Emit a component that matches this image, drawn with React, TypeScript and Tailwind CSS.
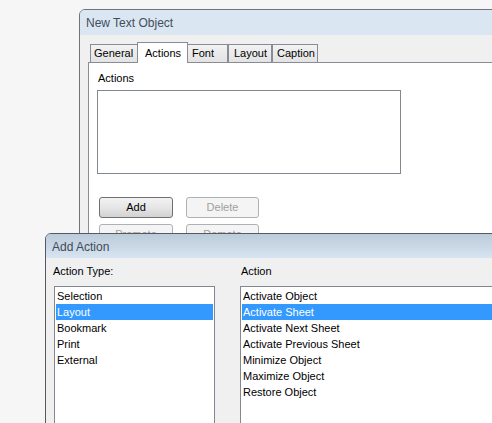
import React from "react";

const font = { fontFamily: '"Liberation Sans", Arial, sans-serif' };

type ListProps = {
  items: string[];
  selected: number;
  className: string;
};

function ListBox({ items, selected, className }: ListProps) {
  return (
    <div className={`border border-[#828790] bg-white p-[1px] ${className}`}>
      {items.map((item, i) => (
        <div
          key={item}
          className={`h-[16px] pl-[1px] text-[11px] leading-[16px] whitespace-nowrap ${
            i === selected ? "bg-[#3399ff] text-white" : "text-black"
          }`}
        >
          {item}
        </div>
      ))}
    </div>
  );
}

function Button({ label, disabled }: { label: string; disabled?: boolean }) {
  return (
    <div
      className={`flex h-[21px] items-center justify-center rounded-[3px] border text-[11px] ${
        disabled
          ? "border-[#adb2b5] bg-[#f4f4f4] text-[#a0a0a0]"
          : "border-[#707070] bg-gradient-to-b from-[#f2f2f2] via-[#e6e6e6] to-[#d2d2d2] text-black"
      }`}
    >
      {label}
    </div>
  );
}

export default function App() {
  return (
    <div
      className="relative h-[423px] w-[492px] overflow-hidden bg-[#f6f6f6]"
      style={font}
    >
      {/* New Text Object window */}
      <div className="absolute left-[79px] top-[9px] flex h-[300px] w-[480px] flex-col overflow-hidden rounded-tl-[6px] border border-[#6f747b] bg-[#f0f0f0]">
        <div className="flex h-[25px] shrink-0 items-center bg-[#dae6f2] pl-[6px] pt-[1px] text-[12px] text-[#434e5b]">
          New Text Object
        </div>
        <div className="flex flex-1 flex-col pl-[8px] pt-[7px]">
          <div className="flex h-[20px] items-end pl-[2px] text-[11px] text-black">
            <div className="flex h-[18px] w-[48px] items-center border border-b-0 border-[#898c95] bg-gradient-to-b from-[#f2f2f2] to-[#e3e3e3] pl-[3px]">
              General
            </div>
            <div className="relative z-10 -mb-px -ml-[1px] flex h-[21px] w-[51px] items-center border border-b-0 border-[#898c95] bg-white pl-[7px]">
              Actions
            </div>
            <div className="-ml-[1px] flex h-[18px] w-[41px] items-center border border-b-0 border-[#898c95] bg-gradient-to-b from-[#f2f2f2] to-[#e3e3e3] pl-[4px]">
              Font
            </div>
            <div className="flex h-[18px] w-[44px] items-center border border-b-0 border-[#898c95] bg-gradient-to-b from-[#f2f2f2] to-[#e3e3e3] pl-[5px]">
              Layout
            </div>
            <div className="flex h-[18px] w-[46px] items-center border border-b-0 border-[#898c95] bg-gradient-to-b from-[#f2f2f2] to-[#e3e3e3] pl-[4px]">
              Caption
            </div>
          </div>
          <div className="flex flex-1 flex-col border border-[#898c95] bg-white pl-[8px] pt-[9px]">
            <div className="ml-[1px] text-[11px] leading-[13px] text-black">Actions</div>
            <div className="mt-[5px] h-[84px] w-[304px] border border-[#828790] bg-white" />
            <div className="ml-[2px] mt-[23px] grid w-[160px] grid-cols-[74px_73px] gap-x-[13px] gap-y-[6px]">
              <Button label="Add" />
              <Button label="Delete" disabled />
              <Button label="Promote" disabled />
              <Button label="Demote" disabled />
            </div>
          </div>
        </div>
      </div>

      {/* Add Action window */}
      <div className="absolute left-[45px] top-[233px] z-20 flex h-[220px] w-[480px] flex-col overflow-hidden rounded-tl-[6px] border border-[#565a60] bg-[#f0f0f0]">
        <div className="flex h-[24px] shrink-0 items-center bg-gradient-to-b from-[#bccbda] to-[#d7e4f1] pl-[6px] pt-[1px] text-[12px] text-[#3f4b58]">
          Add Action
        </div>
        <div className="flex flex-1 pl-[8px] pt-[7px]">
          <div className="flex flex-col">
            <div className="-ml-[1px] text-[11px] leading-[13px] text-black">Action Type:</div>
            <ListBox
              className="mt-[8px] h-[200px] w-[161px]"
              items={["Selection", "Layout", "Bookmark", "Print", "External"]}
              selected={1}
            />
          </div>
          <div className="ml-[25px] flex flex-col">
            <div className="ml-[1px] text-[11px] leading-[13px] text-black">Action</div>
            <ListBox
              className="mt-[8px] h-[200px] w-[280px]"
              items={[
                "Activate Object",
                "Activate Sheet",
                "Activate Next Sheet",
                "Activate Previous Sheet",
                "Minimize Object",
                "Maximize Object",
                "Restore Object",
              ]}
              selected={1}
            />
          </div>
        </div>
      </div>
    </div>
  );
}
